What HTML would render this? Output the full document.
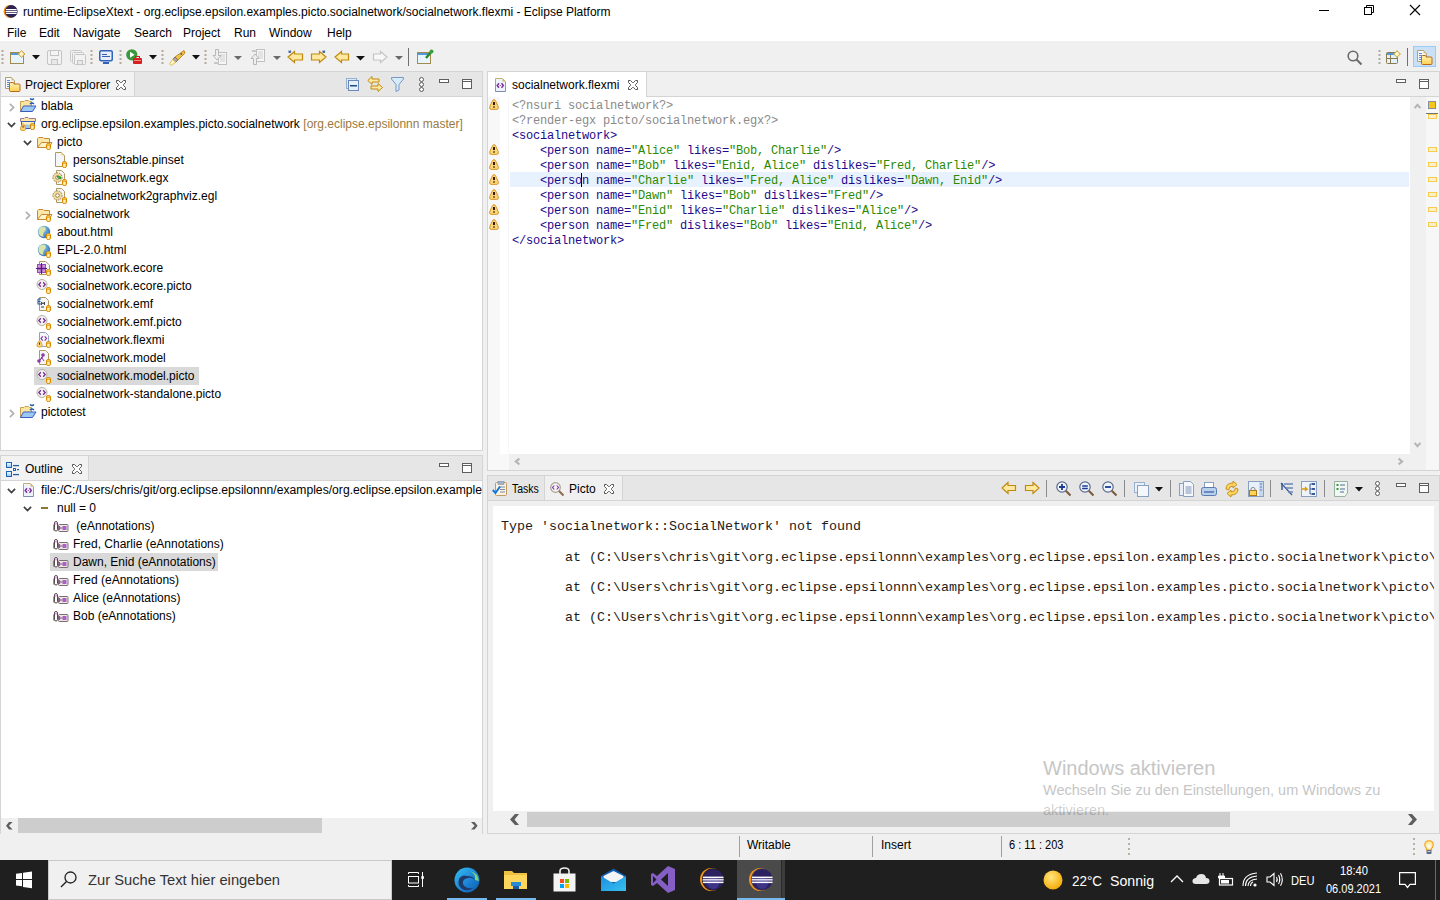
<!DOCTYPE html>
<html><head><meta charset="utf-8"><style>
*{margin:0;padding:0;box-sizing:border-box}
html,body{width:1440px;height:900px;overflow:hidden;background:#f0f0f0;font-family:"Liberation Sans",sans-serif;font-size:12px;color:#000}
.a{position:absolute}
.t{position:absolute;white-space:pre;line-height:14px}
svg{position:absolute;overflow:visible}
.code{position:absolute;white-space:pre;font-family:"Liberation Mono",monospace;font-size:12px;letter-spacing:-0.2px;line-height:15px}
.pi{color:#8a8a8a}.tg{color:#1c0a8a}.vl{color:#2a8a00}
.pic{position:absolute;white-space:pre;font-family:"Liberation Mono",monospace;font-size:13.33px;line-height:15px;color:#1c1c1c}
</style></head><body>
<div class="a" style="left:0px;top:0px;width:1440px;height:41px;background:#fff;"></div>
<svg style="left:3px;top:5px" width="15" height="13" viewBox="0 0 15 13"><circle cx="7" cy="6.4" r="6.4" fill="#f7941e"/><circle cx="8.3" cy="6.4" r="6.3" fill="#2c2255"/><rect x="3" y="4" width="10.6" height="1.2" fill="#fff"/><rect x="2.6" y="5.9" width="11.4" height="1.2" fill="#fff"/><rect x="3" y="7.8" width="10.6" height="1.2" fill="#fff"/></svg>
<div class="t" style="left:23px;top:5px">runtime-EclipseXtext - org.eclipse.epsilon.examples.picto.socialnetwork/socialnetwork.flexmi - Eclipse Platform</div>
<svg style="left:1319px;top:10px" width="10" height="1" viewBox="0 0 10 1"><rect width="10" height="1" fill="#000"/></svg>
<svg style="left:1364px;top:5px" width="10" height="10" viewBox="0 0 10 10"><rect x="0.5" y="2.5" width="7" height="7" fill="none" stroke="#000"/><path d="M2.5 2.5V0.5H9.5V7.5H7.5" fill="none" stroke="#000"/></svg>
<svg style="left:1410px;top:5px" width="10" height="10" viewBox="0 0 10 10"><path d="M0 0L10 10M10 0L0 10" stroke="#000" stroke-width="1.1"/></svg>
<div class="t" style="left:7px;top:26px">File</div>
<div class="t" style="left:39px;top:26px">Edit</div>
<div class="t" style="left:73px;top:26px">Navigate</div>
<div class="t" style="left:134px;top:26px">Search</div>
<div class="t" style="left:183px;top:26px">Project</div>
<div class="t" style="left:234px;top:26px">Run</div>
<div class="t" style="left:269px;top:26px">Window</div>
<div class="t" style="left:327px;top:26px">Help</div>
<!-- toolbar -->
<div id="toolbar">
<svg style="left:1px;top:49px" width="3" height="17"><rect x="0.5" y="1" width="2" height="2" fill="#b3aa99"/><rect x="0.5" y="5" width="2" height="2" fill="#b3aa99"/><rect x="0.5" y="9" width="2" height="2" fill="#b3aa99"/><rect x="0.5" y="13" width="2" height="2" fill="#b3aa99"/></svg>
<svg style="left:10px;top:50px" width="16" height="15" viewBox="0 0 16 15"><rect x="0.5" y="2.5" width="13" height="11" fill="#e8f4fc" stroke="#a08a50"/><rect x="1" y="3" width="12" height="2" fill="#4e9ad8"/><path d="M11.5 0.5L13 2.5L15 4L13 5.5L11.5 7.5L10 5.5L8 4L10 2.5Z" fill="#fff5c0" stroke="#c9a040"/></svg>
<svg style="left:32px;top:55px" width="8" height="5"><path d="M0 0H8L4 4.5Z" fill="#111"/></svg>
<svg style="left:47px;top:50px" width="15" height="15" viewBox="0 0 15 15"><rect x="0.5" y="0.5" width="14" height="14" rx="1.5" fill="#f2f2f2" stroke="#c4c4c4"/><rect x="3.5" y="0.5" width="8" height="5" fill="#f5f5f5" stroke="#c4c4c4"/><rect x="4.5" y="9.5" width="6" height="5" fill="#e8e8e8" stroke="#c4c4c4"/></svg>
<svg style="left:70px;top:50px" width="16" height="15" viewBox="0 0 16 15"><rect x="0.5" y="0.5" width="11" height="11" rx="1" fill="#f2f2f2" stroke="#c8c8c8"/><rect x="2.5" y="2.5" width="11" height="11" rx="1" fill="#f2f2f2" stroke="#c8c8c8"/><rect x="4.5" y="4.5" width="11" height="10" rx="1" fill="#f2f2f2" stroke="#c4c4c4"/><rect x="7.5" y="10.5" width="5" height="4" fill="#e8e8e8" stroke="#c4c4c4"/></svg>
<svg style="left:90px;top:49px" width="3" height="17"><rect x="0.5" y="1" width="2" height="2" fill="#b3aa99"/><rect x="0.5" y="5" width="2" height="2" fill="#b3aa99"/><rect x="0.5" y="9" width="2" height="2" fill="#b3aa99"/><rect x="0.5" y="13" width="2" height="2" fill="#b3aa99"/></svg>
<svg style="left:99px;top:50px" width="14" height="14" viewBox="0 0 14 14"><rect x="0.75" y="0.75" width="12.5" height="10" rx="1.5" fill="#e6eefa" stroke="#2f62b8" stroke-width="1.5"/><rect x="3" y="4" width="5" height="1" fill="#3860a8"/><rect x="3" y="6" width="8" height="1" fill="#3860a8"/><rect x="4" y="12" width="6" height="2" fill="#2f62b8"/></svg>
<svg style="left:119px;top:49px" width="3" height="17"><rect x="0.5" y="1" width="2" height="2" fill="#b3aa99"/><rect x="0.5" y="5" width="2" height="2" fill="#b3aa99"/><rect x="0.5" y="9" width="2" height="2" fill="#b3aa99"/><rect x="0.5" y="13" width="2" height="2" fill="#b3aa99"/></svg>
<svg style="left:126px;top:49px" width="17" height="16" viewBox="0 0 17 16"><circle cx="5.8" cy="5.8" r="5.6" fill="#3a9a3a"/><path d="M4 2.8L8.6 5.8L4 8.8Z" fill="#fff"/><rect x="7" y="9" width="9" height="6" rx="1" fill="#d42020"/><rect x="9.5" y="7.5" width="4" height="2" fill="none" stroke="#d42020"/><rect x="8" y="11" width="7" height="1" fill="#ff8a8a"/></svg>
<svg style="left:149px;top:55px" width="8" height="5"><path d="M0 0H8L4 4.5Z" fill="#111"/></svg>
<svg style="left:161px;top:49px" width="3" height="17"><rect x="0.5" y="1" width="2" height="2" fill="#b3aa99"/><rect x="0.5" y="5" width="2" height="2" fill="#b3aa99"/><rect x="0.5" y="9" width="2" height="2" fill="#b3aa99"/><rect x="0.5" y="13" width="2" height="2" fill="#b3aa99"/></svg>
<svg style="left:169px;top:50px" width="17" height="16" viewBox="0 0 17 16"><path d="M15 0.5L16 3L9 10L6 7Z" fill="#f1c24a" stroke="#c08a20"/><path d="M6 7L9 10L6.5 12.5L3.5 9.5Z" fill="#a8a8b0" stroke="#907040"/><path d="M3.5 9.5L6.5 12.5L2 15.5L0.5 14Z" fill="#fff6c8" stroke="#e0c060"/><circle cx="12.3" cy="4" r="0.9" fill="#2f62b8"/></svg>
<svg style="left:192px;top:55px" width="8" height="5"><path d="M0 0H8L4 4.5Z" fill="#111"/></svg>
<svg style="left:204px;top:49px" width="3" height="17"><rect x="0.5" y="1" width="2" height="2" fill="#b3aa99"/><rect x="0.5" y="5" width="2" height="2" fill="#b3aa99"/><rect x="0.5" y="9" width="2" height="2" fill="#b3aa99"/><rect x="0.5" y="13" width="2" height="2" fill="#b3aa99"/></svg>
<svg style="left:213px;top:49px" width="14" height="16" viewBox="0 0 14 16"><rect x="5.5" y="3.5" width="8" height="12" fill="#f6f6f6" stroke="#c0c0c0"/><path d="M7 6H12M7 8H12M7 10H12M7 12H12" stroke="#d0d0d0"/><path d="M2.5 0.5H5.5V6.5H8L4 11L0 6.5H2.5Z" fill="#eee" stroke="#b8b8b8"/><rect x="1" y="13" width="5" height="2" fill="#c8c8c8"/></svg>
<svg style="left:234px;top:56px" width="8" height="5"><path d="M0 0H8L4 4Z" fill="#6a6a6a"/></svg>
<svg style="left:251px;top:49px" width="14" height="16" viewBox="0 0 14 16"><rect x="5.5" y="0.5" width="8" height="12" fill="#f6f6f6" stroke="#c0c0c0"/><path d="M7 3H12M7 5H12M7 7H12M7 9H12" stroke="#d0d0d0"/><path d="M2.5 15.5H5.5V9.5H8L4 5L0 9.5H2.5Z" fill="#eee" stroke="#b8b8b8"/><rect x="1" y="1" width="4" height="2" fill="#c8c8c8"/></svg>
<svg style="left:273px;top:56px" width="8" height="5"><path d="M0 0H8L4 4Z" fill="#6a6a6a"/></svg>
<svg style="left:287px;top:50px" width="17" height="14" viewBox="0 0 17 14"><path d="M7.5 1.5L1 7L7.5 12.5V10H15.5V4H7.5Z" fill="#ffe9a0" stroke="#c08a10" stroke-width="1.2"/><path d="M2 0.5L3.5 3M3.5 0.5L2 3M1.3 1.8H4.2" stroke="#3a5a9a" stroke-width="1"/></svg>
<svg style="left:310px;top:50px" width="17" height="14" viewBox="0 0 17 14"><path d="M9.5 1.5L16 7L9.5 12.5V10H1.5V4H9.5Z" fill="#ffe9a0" stroke="#c08a10" stroke-width="1.2"/><path d="M13 0.5L14.5 3M14.5 0.5L13 3M12.3 1.8H15.2" stroke="#3a5a9a" stroke-width="1"/></svg>
<svg style="left:334px;top:50px" width="16" height="14" viewBox="0 0 16 14"><path d="M7.5 1.5L1 7L7.5 12.5V10H14.5V4H7.5Z" fill="#ffe9a0" stroke="#c08a10" stroke-width="1.2"/></svg>
<svg style="left:356px;top:56px" width="9" height="5"><path d="M0 0H9L4.5 4.5Z" fill="#111"/></svg>
<svg style="left:372px;top:50px" width="16" height="14" viewBox="0 0 16 14"><path d="M8.5 1.5L15 7L8.5 12.5V10H1.5V4H8.5Z" fill="#f8f8f8" stroke="#c4c4c4" stroke-width="1.2"/></svg>
<svg style="left:395px;top:56px" width="8" height="5"><path d="M0 0H8L4 4Z" fill="#6a6a6a"/></svg>
<svg style="left:408px;top:48px" width="1" height="18"><rect width="1" height="18" fill="#6e6e6e"/></svg>
<svg style="left:417px;top:49px" width="17" height="16" viewBox="0 0 17 16"><rect x="0.5" y="3.5" width="13" height="11" fill="#e8f4fc" stroke="#a08a50"/><rect x="1" y="4" width="12" height="2" fill="#4e9ad8"/><path d="M9 9L15 2" stroke="#2a8a2a" stroke-width="2.5"/><circle cx="14.5" cy="2.5" r="2" fill="#3aa03a"/></svg>
<!-- right side toolbar -->
<svg style="left:1347px;top:50px" width="16" height="16" viewBox="0 0 16 16"><circle cx="6" cy="6" r="4.8" fill="none" stroke="#6a6a6a" stroke-width="1.6"/><path d="M9.5 9.5L14.5 14.5" stroke="#6a6a6a" stroke-width="2"/></svg>
<svg style="left:1378px;top:49px" width="3" height="17"><rect x="0.5" y="1" width="2" height="2" fill="#b3aa99"/><rect x="0.5" y="5" width="2" height="2" fill="#b3aa99"/><rect x="0.5" y="9" width="2" height="2" fill="#b3aa99"/><rect x="0.5" y="13" width="2" height="2" fill="#b3aa99"/></svg>
<svg style="left:1386px;top:50px" width="15" height="15" viewBox="0 0 15 15"><rect x="0.5" y="2.5" width="11" height="11" rx="1" fill="#e3f1fb" stroke="#8a7a50"/><rect x="1" y="3" width="10" height="2" fill="#4e9ad8"/><path d="M4.5 5V13.5M1 8.5H11" stroke="#8a7a50"/><path d="M11 0.5L12.5 2.5L14.5 4L12.5 5.5L11 7.5L9.5 5.5L7.5 4L9.5 2.5Z" fill="#fff5c0" stroke="#c9a040"/></svg>
<svg style="left:1407px;top:48px" width="1" height="18"><rect width="1" height="18" fill="#6e6e6e"/></svg>
<div class="a" style="left:1413px;top:46px;width:23px;height:21px;background:#c9e0f7;border:1px solid #99ccf5"></div>
<svg style="left:1417px;top:50px" width="16" height="16" viewBox="0 0 16 16"><defs><linearGradient id="pf2" x1="0" y1="0" x2="0" y2="1"><stop offset="0" stop-color="#fff4b8"/><stop offset="1" stop-color="#ffcf50"/></linearGradient></defs><path d="M0.5 0.5H6.5L9.5 3.5V11.5H0.5Z" fill="#f6f8fc" stroke="#b0a070"/><path d="M6.5 0.5V3.5H9.5Z" fill="#d8c088"/><rect x="2" y="3" width="3" height="1" fill="#6088c8"/><rect x="2" y="5" width="3" height="1" fill="#6088c8"/><rect x="2" y="7" width="2.5" height="1" fill="#6088c8"/><rect x="2" y="9" width="2.5" height="1" fill="#6088c8"/><path d="M4.5 7Q4.5 5.5 5.5 5.5H8Q9 5.5 9 6.5V7H14Q15 7 15 8V13.5Q15 14.5 14 14.5H5.5Q4.5 14.5 4.5 13.5Z" fill="url(#pf2)" stroke="#b86a1a"/></svg>
</div>

<div class="a" style="left:0px;top:71px;width:483px;height:380px;background:#d4d4d4;"></div>
<div class="a" style="left:1px;top:72px;width:481px;height:378px;background:#fff;"></div>
<div class="a" style="left:1px;top:72px;width:481px;height:24px;background:#e6e6e6;"></div>
<div class="a" style="left:1px;top:96px;width:481px;height:1px;background:#d4d4d4;"></div>
<div class="a" style="left:1px;top:72px;width:133px;height:24px;background:#f2f2f2;"></div>
<div class="a" style="left:134px;top:72px;width:1px;height:25px;background:#d4d4d4;"></div>
<svg style="left:5px;top:77px" width="16" height="16" viewBox="0 0 16 16"><defs><linearGradient id="pf1" x1="0" y1="0" x2="0" y2="1"><stop offset="0" stop-color="#fff4b8"/><stop offset="1" stop-color="#ffcf50"/></linearGradient></defs><path d="M0.5 0.5H6.5L9.5 3.5V11.5H0.5Z" fill="#f6f8fc" stroke="#b0a070"/><path d="M6.5 0.5V3.5H9.5Z" fill="#d8c088"/><rect x="2" y="3" width="3" height="1" fill="#6088c8"/><rect x="2" y="5" width="3" height="1" fill="#6088c8"/><rect x="2" y="7" width="2.5" height="1" fill="#6088c8"/><rect x="2" y="9" width="2.5" height="1" fill="#6088c8"/><path d="M4.5 7Q4.5 5.5 5.5 5.5H8Q9 5.5 9 6.5V7H14Q15 7 15 8V13.5Q15 14.5 14 14.5H5.5Q4.5 14.5 4.5 13.5Z" fill="url(#pf1)" stroke="#b86a1a"/></svg>
<div class="t" style="left:25px;top:78px">Project Explorer</div>
<svg style="left:116px;top:80px" width="10" height="10" viewBox="0 0 10 10"><path d="M0.5 0.5H2.5L4.5 2.5H5.5L7.5 0.5H9.5V2.5L7.5 4.5V5.5L9.5 7.5V9.5H7.5L5.5 7.5H4.5L2.5 9.5H0.5V7.5L2.5 5.5V4.5L0.5 2.5Z" fill="#fff" stroke="#555" stroke-width="1" stroke-linejoin="miter"/></svg>
<svg style="left:346px;top:78px" width="13" height="13" viewBox="0 0 13 13"><rect x="0.5" y="0.5" width="10" height="10" fill="#dbe8f6" stroke="#9ab0d0"/><rect x="2.5" y="2.5" width="10" height="10" fill="#e6f0fa" stroke="#6a88b8"/><rect x="4" y="7" width="7" height="1.5" fill="#1a4a8a"/></svg>
<svg style="left:367px;top:76px" width="17" height="16" viewBox="0 0 17 16"><path d="M5 0.5L0.8 4.5L5 8.5V6H12V3H5Z" fill="#ffe9a0" stroke="#c08a10"/><path d="M11 7.5L15.5 11.5L11 15.5V13H4V10H11Z" fill="#ffe9a0" stroke="#c08a10"/></svg>
<svg style="left:391px;top:77px" width="13" height="15" viewBox="0 0 13 15"><path d="M0.5 0.5H12.5V2L8 7.5V13L5 14.5V7.5L0.5 2Z" fill="#d6ecfa" stroke="#7a98c0"/></svg>
<svg style="left:419px;top:77px" width="5" height="15" viewBox="0 0 5 15"><circle cx="2.5" cy="2.5" r="2" fill="#fff" stroke="#5a5a5a"/><circle cx="2.5" cy="7.5" r="2" fill="#fff" stroke="#5a5a5a"/><circle cx="2.5" cy="12.5" r="2" fill="#fff" stroke="#5a5a5a"/></svg>
<svg style="left:439px;top:79px" width="10" height="4" viewBox="0 0 10 4"><rect x="0.5" y="0.5" width="9" height="3" fill="#fff" stroke="#5f5f5f"/></svg>
<svg style="left:462px;top:79px" width="10" height="10" viewBox="0 0 10 10"><rect x="0.5" y="0.5" width="9" height="9" fill="#fff" stroke="#5f5f5f"/><path d="M0 2.5H10" stroke="#5f5f5f"/></svg>
<div class="a" style="left:34px;top:367px;width:165px;height:18px;background:#d9d9d9;"></div>
<svg style="left:9px;top:103px" width="6" height="9" viewBox="0 0 6 9"><path d="M0.9 0.9L4.6 4.5L0.9 8.1" fill="none" stroke="#b0b0b0" stroke-width="1.7"/></svg>
<svg style="left:20px;top:98px" width="17" height="15" viewBox="0 0 17 15"><path d="M0.5 3.5H4L5 2.5H8.5L9.5 3.5H11.5V13.5H0.5Z" fill="#fbe3a0" stroke="#c6a050"/><path d="M0.5 13.5L3.5 8H16L12.5 13.5Z" fill="#9cc8f4" stroke="#3a5cc0"/><path d="M10 0.5Q12 2.5 14 0.5M10 6Q12 4 14 6" fill="none" stroke="#1f5aa8" stroke-width="1.3"/></svg>
<div class="t" style="left:41px;top:99px">blabla</div>
<svg style="left:7px;top:122px" width="9" height="6" viewBox="0 0 9 6"><path d="M0.9 0.9L4.5 4.6L8.1 0.9" fill="none" stroke="#404040" stroke-width="1.7"/></svg>
<svg style="left:20px;top:116px" width="17" height="15" viewBox="0 0 17 15"><path d="M0.5 2.5H4L5 1.5H8L9 2.5H15.5V5.5H0.5Z" fill="#fbe3a0" stroke="#9a7aa0"/><path d="M1.5 5.5H14.5V12.5H1.5Z" fill="#fff0c0" stroke="#3a5cc0"/><path d="M5 8.5H13V12H5Z" fill="#9cc8f4"/><path d="M3 7.5Q4 7.5 5.5 12Q6 14.5 4 14.5H2Q0 14.5 0.5 12Q2 7.5 3 7.5Z" fill="#fad67a" stroke="#d8962a" stroke-width="0.9"/><rect x="2.6" y="9.5" width="0.9" height="2.2" fill="#3a1800"/><path d="M10.5 8.5Q10.5 7.5 12.5 7.5Q14.5 7.5 14.5 8.5V12.5Q14.5 13.5 12.5 13.5Q10.5 13.5 10.5 12.5Z" fill="#ffd86a" stroke="#d98a00" stroke-width="1"/><path d="M10.8 9.2H14.2" stroke="#d98a00" stroke-width="0.8"/><rect x="11.6" y="10" width="1.2" height="2.6" fill="#fff6d0"/></svg>
<div class="t" style="left:41px;top:117px">org.eclipse.epsilon.examples.picto.socialnetwork</div>
<div class="t" style="left:300px;top:117px;color:#9a7a40"> [org.eclipse.epsilonnn master]</div>
<svg style="left:23px;top:140px" width="9" height="6" viewBox="0 0 9 6"><path d="M0.9 0.9L4.5 4.6L8.1 0.9" fill="none" stroke="#404040" stroke-width="1.7"/></svg>
<svg style="left:36px;top:134px" width="17" height="16" viewBox="0 0 17 16"><path d="M1.5 13.5V4.5L2.5 3.5H7L8 4.5H13.5V13.5Z" fill="#fde7a8" stroke="#c68a3a"/><path d="M1.5 13.5L5.5 8.5H16L13 13.5Z" fill="#fff3c8" stroke="#c68a3a"/><path d="M10.5 10.5Q10.5 9.5 12.5 9.5Q14.5 9.5 14.5 10.5V14.5Q14.5 15.5 12.5 15.5Q10.5 15.5 10.5 14.5Z" fill="#ffd86a" stroke="#d98a00" stroke-width="1"/><path d="M10.8 11.2H14.2" stroke="#d98a00" stroke-width="0.8"/><rect x="11.6" y="12" width="1.2" height="2.6" fill="#fff6d0"/></svg>
<div class="t" style="left:57px;top:135px">picto</div>
<svg style="left:52px;top:152px" width="17" height="16" viewBox="0 0 17 16"><path d="M3.5 0.5H9.5L12.5 3.5V14.5H3.5Z" fill="#f4f6fa" stroke="#b09a60"/><path d="M9.5 0.5L12.5 3.5H9.5Z" fill="#e8cc80"/><path d="M10.5 10.5Q10.5 9.5 12.5 9.5Q14.5 9.5 14.5 10.5V14.5Q14.5 15.5 12.5 15.5Q10.5 15.5 10.5 14.5Z" fill="#ffd86a" stroke="#d98a00" stroke-width="1"/><path d="M10.8 11.2H14.2" stroke="#d98a00" stroke-width="0.8"/><rect x="11.6" y="12" width="1.2" height="2.6" fill="#fff6d0"/></svg>
<div class="t" style="left:73px;top:153px">persons2table.pinset</div>
<svg style="left:52px;top:170px" width="17" height="16" viewBox="0 0 17 16"><path d="M4.5 0.5H9.5L12.5 3.5V14.5H4.5Z" fill="#f4f6fa" stroke="#b09a60"/><circle cx="5.5" cy="7.5" r="4.6" fill="#f0dca0" stroke="#9a8050" stroke-dasharray="1.6 0.9"/><circle cx="5.5" cy="7.5" r="1.8" fill="#fff" stroke="#9a8050"/><path d="M5 6Q7 5 8 7L9 6V9H6L7 8Q6.5 7 5 8Z" fill="#2a9a2a"/><path d="M10.5 10.5Q10.5 9.5 12.5 9.5Q14.5 9.5 14.5 10.5V14.5Q14.5 15.5 12.5 15.5Q10.5 15.5 10.5 14.5Z" fill="#ffd86a" stroke="#d98a00" stroke-width="1"/><path d="M10.8 11.2H14.2" stroke="#d98a00" stroke-width="0.8"/><rect x="11.6" y="12" width="1.2" height="2.6" fill="#fff6d0"/></svg>
<div class="t" style="left:73px;top:171px">socialnetwork.egx</div>
<svg style="left:52px;top:188px" width="17" height="16" viewBox="0 0 17 16"><path d="M4.5 0.5H9.5L12.5 3.5V14.5H4.5Z" fill="#f4f6fa" stroke="#b09a60"/><circle cx="5.5" cy="7.5" r="4.6" fill="#f0dca0" stroke="#9a8050" stroke-dasharray="1.6 0.9"/><circle cx="5.5" cy="7.5" r="1.8" fill="#fff" stroke="#9a8050"/><path d="M10.5 10.5Q10.5 9.5 12.5 9.5Q14.5 9.5 14.5 10.5V14.5Q14.5 15.5 12.5 15.5Q10.5 15.5 10.5 14.5Z" fill="#ffd86a" stroke="#d98a00" stroke-width="1"/><path d="M10.8 11.2H14.2" stroke="#d98a00" stroke-width="0.8"/><rect x="11.6" y="12" width="1.2" height="2.6" fill="#fff6d0"/></svg>
<div class="t" style="left:73px;top:189px">socialnetwork2graphviz.egl</div>
<svg style="left:25px;top:211px" width="6" height="9" viewBox="0 0 6 9"><path d="M0.9 0.9L4.6 4.5L0.9 8.1" fill="none" stroke="#b0b0b0" stroke-width="1.7"/></svg>
<svg style="left:36px;top:206px" width="17" height="16" viewBox="0 0 17 16"><path d="M1.5 13.5V4.5L2.5 3.5H7L8 4.5H13.5V13.5Z" fill="#fde7a8" stroke="#c68a3a"/><path d="M1.5 13.5L5.5 8.5H16L13 13.5Z" fill="#fff3c8" stroke="#c68a3a"/><path d="M10.5 10.5Q10.5 9.5 12.5 9.5Q14.5 9.5 14.5 10.5V14.5Q14.5 15.5 12.5 15.5Q10.5 15.5 10.5 14.5Z" fill="#ffd86a" stroke="#d98a00" stroke-width="1"/><path d="M10.8 11.2H14.2" stroke="#d98a00" stroke-width="0.8"/><rect x="11.6" y="12" width="1.2" height="2.6" fill="#fff6d0"/></svg>
<div class="t" style="left:57px;top:207px">socialnetwork</div>
<svg style="left:36px;top:224px" width="17" height="16" viewBox="0 0 17 16"><defs><radialGradient id="glb" cx="0.35" cy="0.3" r="0.8"><stop offset="0" stop-color="#9ad0f0"/><stop offset="1" stop-color="#2a6ab8"/></radialGradient></defs><circle cx="8" cy="8" r="6.2" fill="url(#glb)"/><path d="M3.5 4Q6 2 9 3Q11 5.5 8.5 7.5Q6.5 9 7.5 13Q4 12.5 2.5 9.5Q2 6 3.5 4Z" fill="#d8e4a8"/><path d="M10.5 10.5Q10.5 9.5 12.5 9.5Q14.5 9.5 14.5 10.5V14.5Q14.5 15.5 12.5 15.5Q10.5 15.5 10.5 14.5Z" fill="#ffd86a" stroke="#d98a00" stroke-width="1"/><path d="M10.8 11.2H14.2" stroke="#d98a00" stroke-width="0.8"/><rect x="11.6" y="12" width="1.2" height="2.6" fill="#fff6d0"/></svg>
<div class="t" style="left:57px;top:225px">about.html</div>
<svg style="left:36px;top:242px" width="17" height="16" viewBox="0 0 17 16"><defs><radialGradient id="glb" cx="0.35" cy="0.3" r="0.8"><stop offset="0" stop-color="#9ad0f0"/><stop offset="1" stop-color="#2a6ab8"/></radialGradient></defs><circle cx="8" cy="8" r="6.2" fill="url(#glb)"/><path d="M3.5 4Q6 2 9 3Q11 5.5 8.5 7.5Q6.5 9 7.5 13Q4 12.5 2.5 9.5Q2 6 3.5 4Z" fill="#d8e4a8"/><path d="M10.5 10.5Q10.5 9.5 12.5 9.5Q14.5 9.5 14.5 10.5V14.5Q14.5 15.5 12.5 15.5Q10.5 15.5 10.5 14.5Z" fill="#ffd86a" stroke="#d98a00" stroke-width="1"/><path d="M10.8 11.2H14.2" stroke="#d98a00" stroke-width="0.8"/><rect x="11.6" y="12" width="1.2" height="2.6" fill="#fff6d0"/></svg>
<div class="t" style="left:57px;top:243px">EPL-2.0.html</div>
<svg style="left:36px;top:260px" width="17" height="16" viewBox="0 0 17 16"><path d="M3.5 1.5H9.5L13.5 5V14.5H3.5Z" fill="#f4f6fa" stroke="#b09a60"/><rect x="1" y="4" width="9" height="9" fill="#9a4ab8"/><path d="M0 8.5H11M5.5 3V14" stroke="#5a1a78" stroke-width="1"/><rect x="2" y="5" width="2.5" height="2.5" fill="#c898d8"/><rect x="6.5" y="5" width="2.5" height="2.5" fill="#c898d8"/><rect x="2" y="9.5" width="2.5" height="2.5" fill="#c898d8"/><rect x="6.5" y="9.5" width="2.5" height="2.5" fill="#c898d8"/><path d="M10.5 10.5Q10.5 9.5 12.5 9.5Q14.5 9.5 14.5 10.5V14.5Q14.5 15.5 12.5 15.5Q10.5 15.5 10.5 14.5Z" fill="#ffd86a" stroke="#d98a00" stroke-width="1"/><path d="M10.8 11.2H14.2" stroke="#d98a00" stroke-width="0.8"/><rect x="11.6" y="12" width="1.2" height="2.6" fill="#fff6d0"/></svg>
<div class="t" style="left:57px;top:261px">socialnetwork.ecore</div>
<svg style="left:36px;top:278px" width="17" height="16" viewBox="0 0 17 16"><circle cx="6" cy="6.5" r="5" fill="#f2f2f2" stroke="#b0b0a0"/><path d="M4.8 4.3L2.8 6.5L4.8 8.7M7.2 4.3L9.2 6.5L7.2 8.7" fill="none" stroke="#7a2a98" stroke-width="1.3"/><path d="M10.5 10.5Q10.5 9.5 12.5 9.5Q14.5 9.5 14.5 10.5V14.5Q14.5 15.5 12.5 15.5Q10.5 15.5 10.5 14.5Z" fill="#ffd86a" stroke="#d98a00" stroke-width="1"/><path d="M10.8 11.2H14.2" stroke="#d98a00" stroke-width="0.8"/><rect x="11.6" y="12" width="1.2" height="2.6" fill="#fff6d0"/></svg>
<div class="t" style="left:57px;top:279px">socialnetwork.ecore.picto</div>
<svg style="left:36px;top:296px" width="17" height="16" viewBox="0 0 17 16"><path d="M3.5 1.5H9.5L12.5 4.5V14.5H3.5Z" fill="#f4f6fa" stroke="#b09a60"/><path d="M2 3H5M2 3V8H5M2 5.5H4.5" fill="none" stroke="#2a5a9a" stroke-width="1.1"/><path d="M5.5 9V6L7 8L8.5 6V9" fill="none" stroke="#3a3a3a" stroke-width="0.9"/><path d="M5 11H8" stroke="#3a3a3a"/><path d="M10.5 10.5Q10.5 9.5 12.5 9.5Q14.5 9.5 14.5 10.5V14.5Q14.5 15.5 12.5 15.5Q10.5 15.5 10.5 14.5Z" fill="#ffd86a" stroke="#d98a00" stroke-width="1"/><path d="M10.8 11.2H14.2" stroke="#d98a00" stroke-width="0.8"/><rect x="11.6" y="12" width="1.2" height="2.6" fill="#fff6d0"/></svg>
<div class="t" style="left:57px;top:297px">socialnetwork.emf</div>
<svg style="left:36px;top:314px" width="17" height="16" viewBox="0 0 17 16"><circle cx="6" cy="6.5" r="5" fill="#f2f2f2" stroke="#b0b0a0"/><path d="M4.8 4.3L2.8 6.5L4.8 8.7M7.2 4.3L9.2 6.5L7.2 8.7" fill="none" stroke="#7a2a98" stroke-width="1.3"/><path d="M10.5 10.5Q10.5 9.5 12.5 9.5Q14.5 9.5 14.5 10.5V14.5Q14.5 15.5 12.5 15.5Q10.5 15.5 10.5 14.5Z" fill="#ffd86a" stroke="#d98a00" stroke-width="1"/><path d="M10.8 11.2H14.2" stroke="#d98a00" stroke-width="0.8"/><rect x="11.6" y="12" width="1.2" height="2.6" fill="#fff6d0"/></svg>
<div class="t" style="left:57px;top:315px">socialnetwork.emf.picto</div>
<svg style="left:36px;top:332px" width="17" height="16" viewBox="0 0 17 16"><path d="M3.5 0.5H9.5L12.5 3.5V14.5H3.5Z" fill="#f4f6fa" stroke="#9aa0b8"/><path d="M6.8 4.3L5 6.5L6.8 8.7M8.7 4.3L10.5 6.5L8.7 8.7" fill="none" stroke="#7a2a98" stroke-width="1.1"/><path d="M3.5 8.5Q4.5 8.5 6 12.5Q6.5 15 4.5 15H2.5Q0.5 15 1 12.5Q2.5 8.5 3.5 8.5Z" fill="#fad67a" stroke="#d8962a" stroke-width="0.9"/><rect x="3.1" y="10.5" width="0.9" height="2.2" fill="#3a1800"/><path d="M10.5 10.5Q10.5 9.5 12.5 9.5Q14.5 9.5 14.5 10.5V14.5Q14.5 15.5 12.5 15.5Q10.5 15.5 10.5 14.5Z" fill="#ffd86a" stroke="#d98a00" stroke-width="1"/><path d="M10.8 11.2H14.2" stroke="#d98a00" stroke-width="0.8"/><rect x="11.6" y="12" width="1.2" height="2.6" fill="#fff6d0"/></svg>
<div class="t" style="left:57px;top:333px">socialnetwork.flexmi</div>
<svg style="left:36px;top:350px" width="17" height="16" viewBox="0 0 17 16"><path d="M3.5 0.5H9.5L12.5 3.5V14.5H3.5Z" fill="#f4f6fa" stroke="#b09a60"/><circle cx="7" cy="5" r="1.8" fill="#8a3aa8"/><circle cx="3" cy="11" r="1.8" fill="#8a3aa8"/><path d="M7 5L6 8L3 11M6 8L8 11" stroke="#8a3aa8" stroke-width="1"/><path d="M10.5 10.5Q10.5 9.5 12.5 9.5Q14.5 9.5 14.5 10.5V14.5Q14.5 15.5 12.5 15.5Q10.5 15.5 10.5 14.5Z" fill="#ffd86a" stroke="#d98a00" stroke-width="1"/><path d="M10.8 11.2H14.2" stroke="#d98a00" stroke-width="0.8"/><rect x="11.6" y="12" width="1.2" height="2.6" fill="#fff6d0"/></svg>
<div class="t" style="left:57px;top:351px">socialnetwork.model</div>
<svg style="left:36px;top:368px" width="17" height="16" viewBox="0 0 17 16"><circle cx="6" cy="6.5" r="5" fill="#f2f2f2" stroke="#b0b0a0"/><path d="M4.8 4.3L2.8 6.5L4.8 8.7M7.2 4.3L9.2 6.5L7.2 8.7" fill="none" stroke="#7a2a98" stroke-width="1.3"/><path d="M10.5 10.5Q10.5 9.5 12.5 9.5Q14.5 9.5 14.5 10.5V14.5Q14.5 15.5 12.5 15.5Q10.5 15.5 10.5 14.5Z" fill="#ffd86a" stroke="#d98a00" stroke-width="1"/><path d="M10.8 11.2H14.2" stroke="#d98a00" stroke-width="0.8"/><rect x="11.6" y="12" width="1.2" height="2.6" fill="#fff6d0"/></svg>
<div class="t" style="left:57px;top:369px">socialnetwork.model.picto</div>
<svg style="left:36px;top:386px" width="17" height="16" viewBox="0 0 17 16"><circle cx="6" cy="6.5" r="5" fill="#f2f2f2" stroke="#b0b0a0"/><path d="M4.8 4.3L2.8 6.5L4.8 8.7M7.2 4.3L9.2 6.5L7.2 8.7" fill="none" stroke="#7a2a98" stroke-width="1.3"/><path d="M10.5 10.5Q10.5 9.5 12.5 9.5Q14.5 9.5 14.5 10.5V14.5Q14.5 15.5 12.5 15.5Q10.5 15.5 10.5 14.5Z" fill="#ffd86a" stroke="#d98a00" stroke-width="1"/><path d="M10.8 11.2H14.2" stroke="#d98a00" stroke-width="0.8"/><rect x="11.6" y="12" width="1.2" height="2.6" fill="#fff6d0"/></svg>
<div class="t" style="left:57px;top:387px">socialnetwork-standalone.picto</div>
<svg style="left:9px;top:409px" width="6" height="9" viewBox="0 0 6 9"><path d="M0.9 0.9L4.6 4.5L0.9 8.1" fill="none" stroke="#b0b0b0" stroke-width="1.7"/></svg>
<svg style="left:20px;top:404px" width="17" height="15" viewBox="0 0 17 15"><path d="M0.5 3.5H4L5 2.5H8.5L9.5 3.5H11.5V13.5H0.5Z" fill="#fbe3a0" stroke="#c6a050"/><path d="M0.5 13.5L3.5 8H16L12.5 13.5Z" fill="#9cc8f4" stroke="#3a5cc0"/><path d="M10 0.5Q12 2.5 14 0.5M10 6Q12 4 14 6" fill="none" stroke="#1f5aa8" stroke-width="1.3"/></svg>
<div class="t" style="left:41px;top:405px">pictotest</div>
<div class="a" style="left:0px;top:455px;width:483px;height:379px;background:#d4d4d4;"></div>
<div class="a" style="left:1px;top:456px;width:481px;height:377px;background:#fff;"></div>
<div class="a" style="left:1px;top:456px;width:481px;height:24px;background:#e6e6e6;"></div>
<div class="a" style="left:1px;top:480px;width:481px;height:1px;background:#d4d4d4;"></div>
<div class="a" style="left:1px;top:456px;width:87px;height:24px;background:#f2f2f2;"></div>
<div class="a" style="left:88px;top:456px;width:1px;height:25px;background:#d4d4d4;"></div>
<svg style="left:6px;top:462px" width="14" height="15" viewBox="0 0 14 15"><defs><linearGradient id="olg" x1="0" y1="0" x2="0" y2="1"><stop offset="0" stop-color="#ffffff"/><stop offset="1" stop-color="#8cc0f8"/></linearGradient></defs><rect x="0.5" y="0.5" width="5" height="5" fill="url(#olg)" stroke="#1a64b0"/><rect x="7.5" y="6.5" width="2" height="2" fill="#fff" stroke="#1a64b0"/><rect x="0.5" y="9.5" width="5" height="5" fill="url(#olg)" stroke="#1a64b0"/><rect x="7" y="3" width="6" height="1.2" fill="#2a5a98"/><rect x="7" y="2" width="6" height="1" fill="#d8f0ff"/><rect x="11" y="7" width="2" height="1.2" fill="#2a5a98"/><rect x="7" y="12" width="6" height="1.2" fill="#2a5a98"/><rect x="7" y="11" width="6" height="1" fill="#d8f0ff"/></svg>
<div class="t" style="left:25px;top:462px">Outline</div>
<svg style="left:72px;top:464px" width="10" height="10" viewBox="0 0 10 10"><path d="M0.5 0.5H2.5L4.5 2.5H5.5L7.5 0.5H9.5V2.5L7.5 4.5V5.5L9.5 7.5V9.5H7.5L5.5 7.5H4.5L2.5 9.5H0.5V7.5L2.5 5.5V4.5L0.5 2.5Z" fill="#fff" stroke="#555" stroke-width="1" stroke-linejoin="miter"/></svg>
<svg style="left:439px;top:463px" width="10" height="4" viewBox="0 0 10 4"><rect x="0.5" y="0.5" width="9" height="3" fill="#fff" stroke="#5f5f5f"/></svg>
<svg style="left:462px;top:463px" width="10" height="10" viewBox="0 0 10 10"><rect x="0.5" y="0.5" width="9" height="9" fill="#fff" stroke="#5f5f5f"/><path d="M0 2.5H10" stroke="#5f5f5f"/></svg>
<div class="a" style="left:50px;top:553px;width:168px;height:18px;background:#d9d9d9;"></div>
<svg style="left:7px;top:488px" width="9" height="6" viewBox="0 0 9 6"><path d="M0.9 0.9L4.5 4.6L8.1 0.9" fill="none" stroke="#404040" stroke-width="1.7"/></svg>
<svg style="left:23px;top:483px" width="11" height="14" viewBox="0 0 11 14"><defs><linearGradient id="fs1" x1="0" y1="0" x2="0" y2="1"><stop offset="0" stop-color="#bfae78"/><stop offset="1" stop-color="#7f8db0"/></linearGradient></defs><path d="M0.5 0.5H7.5L10.5 3.5V13.5H0.5Z" fill="#eef3fb" stroke="url(#fs1)"/><path d="M7.5 0.5L10.5 3.5H7.5Z" fill="#d9b060"/><path d="M4 5.3L2.2 7.5L4 9.7M6.5 5.3L8.3 7.5L6.5 9.7" fill="none" stroke="#7a2a98" stroke-width="1.4"/><circle cx="5.25" cy="7.5" r="0.6" fill="#7a2a98"/></svg>
<div class="a" style="left:41px;top:483px;width:441px;height:16px;overflow:hidden"><div class="t" style="left:0;top:0;transform:scaleX(1.0126);transform-origin:0 0">file:/C:/Users/chris/git/org.eclipse.epsilonnn/examples/org.eclipse.epsilon.examples.picto.socialnetwork/socialnetwork.flexmi</div></div>
<svg style="left:23px;top:506px" width="9" height="6" viewBox="0 0 9 6"><path d="M0.9 0.9L4.5 4.6L8.1 0.9" fill="none" stroke="#404040" stroke-width="1.7"/></svg>
<svg style="left:41px;top:507px" width="7" height="2" viewBox="0 0 7 2"><rect width="7" height="2" fill="#8a7a30"/></svg>
<div class="t" style="left:57px;top:501px">null = 0</div>
<svg style="left:53px;top:521px" width="16" height="12" viewBox="0 0 16 12"><path d="M0.5 3.5H1.8V9.5H0.5Z" fill="#3a2a30"/><rect x="1.5" y="0.5" width="3" height="9.5" rx="1.5" fill="#fff" stroke="#5a4a50" stroke-width="1"/><rect x="2.3" y="2" width="1.4" height="1.5" fill="#f070f0"/><rect x="5.5" y="3.5" width="9.5" height="7" rx="1" fill="#ecebd8" stroke="#7a6a78" stroke-width="1"/><rect x="9.5" y="5" width="4" height="4" fill="#a860c8"/><path d="M6.6 5V9M6.6 7H9.5" stroke="#9040b0" stroke-width="1"/></svg>
<div class="t" style="left:73px;top:519px"> (eAnnotations)</div>
<svg style="left:53px;top:539px" width="16" height="12" viewBox="0 0 16 12"><path d="M0.5 3.5H1.8V9.5H0.5Z" fill="#3a2a30"/><rect x="1.5" y="0.5" width="3" height="9.5" rx="1.5" fill="#fff" stroke="#5a4a50" stroke-width="1"/><rect x="2.3" y="2" width="1.4" height="1.5" fill="#f070f0"/><rect x="5.5" y="3.5" width="9.5" height="7" rx="1" fill="#ecebd8" stroke="#7a6a78" stroke-width="1"/><rect x="9.5" y="5" width="4" height="4" fill="#a860c8"/><path d="M6.6 5V9M6.6 7H9.5" stroke="#9040b0" stroke-width="1"/></svg>
<div class="t" style="left:73px;top:537px">Fred, Charlie (eAnnotations)</div>
<svg style="left:53px;top:557px" width="16" height="12" viewBox="0 0 16 12"><path d="M0.5 3.5H1.8V9.5H0.5Z" fill="#3a2a30"/><rect x="1.5" y="0.5" width="3" height="9.5" rx="1.5" fill="#fff" stroke="#5a4a50" stroke-width="1"/><rect x="2.3" y="2" width="1.4" height="1.5" fill="#f070f0"/><rect x="5.5" y="3.5" width="9.5" height="7" rx="1" fill="#ecebd8" stroke="#7a6a78" stroke-width="1"/><rect x="9.5" y="5" width="4" height="4" fill="#a860c8"/><path d="M6.6 5V9M6.6 7H9.5" stroke="#9040b0" stroke-width="1"/></svg>
<div class="t" style="left:73px;top:555px">Dawn, Enid (eAnnotations)</div>
<svg style="left:53px;top:575px" width="16" height="12" viewBox="0 0 16 12"><path d="M0.5 3.5H1.8V9.5H0.5Z" fill="#3a2a30"/><rect x="1.5" y="0.5" width="3" height="9.5" rx="1.5" fill="#fff" stroke="#5a4a50" stroke-width="1"/><rect x="2.3" y="2" width="1.4" height="1.5" fill="#f070f0"/><rect x="5.5" y="3.5" width="9.5" height="7" rx="1" fill="#ecebd8" stroke="#7a6a78" stroke-width="1"/><rect x="9.5" y="5" width="4" height="4" fill="#a860c8"/><path d="M6.6 5V9M6.6 7H9.5" stroke="#9040b0" stroke-width="1"/></svg>
<div class="t" style="left:73px;top:573px">Fred (eAnnotations)</div>
<svg style="left:53px;top:593px" width="16" height="12" viewBox="0 0 16 12"><path d="M0.5 3.5H1.8V9.5H0.5Z" fill="#3a2a30"/><rect x="1.5" y="0.5" width="3" height="9.5" rx="1.5" fill="#fff" stroke="#5a4a50" stroke-width="1"/><rect x="2.3" y="2" width="1.4" height="1.5" fill="#f070f0"/><rect x="5.5" y="3.5" width="9.5" height="7" rx="1" fill="#ecebd8" stroke="#7a6a78" stroke-width="1"/><rect x="9.5" y="5" width="4" height="4" fill="#a860c8"/><path d="M6.6 5V9M6.6 7H9.5" stroke="#9040b0" stroke-width="1"/></svg>
<div class="t" style="left:73px;top:591px">Alice (eAnnotations)</div>
<svg style="left:53px;top:611px" width="16" height="12" viewBox="0 0 16 12"><path d="M0.5 3.5H1.8V9.5H0.5Z" fill="#3a2a30"/><rect x="1.5" y="0.5" width="3" height="9.5" rx="1.5" fill="#fff" stroke="#5a4a50" stroke-width="1"/><rect x="2.3" y="2" width="1.4" height="1.5" fill="#f070f0"/><rect x="5.5" y="3.5" width="9.5" height="7" rx="1" fill="#ecebd8" stroke="#7a6a78" stroke-width="1"/><rect x="9.5" y="5" width="4" height="4" fill="#a860c8"/><path d="M6.6 5V9M6.6 7H9.5" stroke="#9040b0" stroke-width="1"/></svg>
<div class="t" style="left:73px;top:609px">Bob (eAnnotations)</div>
<div class="a" style="left:1px;top:818px;width:481px;height:16px;background:#f0f0f0;"></div>
<div class="a" style="left:18px;top:818px;width:304px;height:15px;background:#cdcdcd;"></div>
<svg style="left:6px;top:822px" width="7" height="8" viewBox="0 0 7 8"><path d="M3 0H6.6L2.9 3.7L6.6 7.4H3L0 3.7Z" fill="#5e5e5e"/></svg>
<svg style="left:471px;top:822px" width="7" height="8" viewBox="0 0 7 8"><path d="M3.6 0H0L3.7 3.7L0 7.4H3.6L6.6 3.7Z" fill="#5e5e5e"/></svg>
<div class="a" style="left:487px;top:71px;width:953px;height:400px;background:#d4d4d4;"></div>
<div class="a" style="left:488px;top:72px;width:951px;height:398px;background:#fff;"></div>
<div class="a" style="left:488px;top:72px;width:951px;height:24px;background:#f0f0f0;"></div>
<div class="a" style="left:488px;top:96px;width:951px;height:1px;background:#d4d4d4;"></div>
<div class="a" style="left:488px;top:72px;width:158px;height:25px;background:#fff;"></div>
<div class="a" style="left:646px;top:72px;width:1px;height:25px;background:#d4d4d4;"></div>
<svg style="left:495px;top:78px" width="11" height="14" viewBox="0 0 11 14"><defs><linearGradient id="fs2" x1="0" y1="0" x2="0" y2="1"><stop offset="0" stop-color="#bfae78"/><stop offset="1" stop-color="#7f8db0"/></linearGradient></defs><path d="M0.5 0.5H7.5L10.5 3.5V13.5H0.5Z" fill="#eef3fb" stroke="url(#fs2)"/><path d="M7.5 0.5L10.5 3.5H7.5Z" fill="#d9b060"/><path d="M4 5.3L2.2 7.5L4 9.7M6.5 5.3L8.3 7.5L6.5 9.7" fill="none" stroke="#7a2a98" stroke-width="1.4"/><circle cx="5.25" cy="7.5" r="0.6" fill="#7a2a98"/></svg>
<div class="t" style="left:512px;top:78px">socialnetwork.flexmi</div>
<svg style="left:628px;top:80px" width="10" height="10" viewBox="0 0 10 10"><path d="M0.5 0.5H2.5L4.5 2.5H5.5L7.5 0.5H9.5V2.5L7.5 4.5V5.5L9.5 7.5V9.5H7.5L5.5 7.5H4.5L2.5 9.5H0.5V7.5L2.5 5.5V4.5L0.5 2.5Z" fill="#fff" stroke="#555" stroke-width="1" stroke-linejoin="miter"/></svg>
<svg style="left:1396px;top:79px" width="10" height="4" viewBox="0 0 10 4"><rect x="0.5" y="0.5" width="9" height="3" fill="#fff" stroke="#5f5f5f"/></svg>
<svg style="left:1419px;top:79px" width="10" height="10" viewBox="0 0 10 10"><rect x="0.5" y="0.5" width="9" height="9" fill="#fff" stroke="#5f5f5f"/><path d="M0 2.5H10" stroke="#5f5f5f"/></svg>
<div class="a" style="left:488px;top:97px;width:12px;height:357px;background:#f8f8f8;"></div>
<div class="a" style="left:510px;top:172px;width:899px;height:15px;background:#e8f2fe;"></div>
<svg style="left:489px;top:99px" width="10" height="11" viewBox="0 0 10 11"><path d="M5 0.6Q6 0.6 6.9 2.4L9.2 7.6Q10 10.4 7.8 10.4H2.2Q0 10.4 0.8 7.6L3.1 2.4Q4 0.6 5 0.6Z" fill="#fad67a" stroke="#d8962a" stroke-width="1"/><rect x="4" y="3" width="2" height="3" fill="#3a1800"/><rect x="4" y="7" width="2" height="2" fill="#9a7028"/></svg>
<svg style="left:489px;top:144px" width="10" height="11" viewBox="0 0 10 11"><path d="M5 0.6Q6 0.6 6.9 2.4L9.2 7.6Q10 10.4 7.8 10.4H2.2Q0 10.4 0.8 7.6L3.1 2.4Q4 0.6 5 0.6Z" fill="#fad67a" stroke="#d8962a" stroke-width="1"/><rect x="4" y="3" width="2" height="3" fill="#3a1800"/><rect x="4" y="7" width="2" height="2" fill="#9a7028"/></svg>
<svg style="left:489px;top:159px" width="10" height="11" viewBox="0 0 10 11"><path d="M5 0.6Q6 0.6 6.9 2.4L9.2 7.6Q10 10.4 7.8 10.4H2.2Q0 10.4 0.8 7.6L3.1 2.4Q4 0.6 5 0.6Z" fill="#fad67a" stroke="#d8962a" stroke-width="1"/><rect x="4" y="3" width="2" height="3" fill="#3a1800"/><rect x="4" y="7" width="2" height="2" fill="#9a7028"/></svg>
<svg style="left:489px;top:174px" width="10" height="11" viewBox="0 0 10 11"><path d="M5 0.6Q6 0.6 6.9 2.4L9.2 7.6Q10 10.4 7.8 10.4H2.2Q0 10.4 0.8 7.6L3.1 2.4Q4 0.6 5 0.6Z" fill="#fad67a" stroke="#d8962a" stroke-width="1"/><rect x="4" y="3" width="2" height="3" fill="#3a1800"/><rect x="4" y="7" width="2" height="2" fill="#9a7028"/></svg>
<svg style="left:489px;top:189px" width="10" height="11" viewBox="0 0 10 11"><path d="M5 0.6Q6 0.6 6.9 2.4L9.2 7.6Q10 10.4 7.8 10.4H2.2Q0 10.4 0.8 7.6L3.1 2.4Q4 0.6 5 0.6Z" fill="#fad67a" stroke="#d8962a" stroke-width="1"/><rect x="4" y="3" width="2" height="3" fill="#3a1800"/><rect x="4" y="7" width="2" height="2" fill="#9a7028"/></svg>
<svg style="left:489px;top:204px" width="10" height="11" viewBox="0 0 10 11"><path d="M5 0.6Q6 0.6 6.9 2.4L9.2 7.6Q10 10.4 7.8 10.4H2.2Q0 10.4 0.8 7.6L3.1 2.4Q4 0.6 5 0.6Z" fill="#fad67a" stroke="#d8962a" stroke-width="1"/><rect x="4" y="3" width="2" height="3" fill="#3a1800"/><rect x="4" y="7" width="2" height="2" fill="#9a7028"/></svg>
<svg style="left:489px;top:219px" width="10" height="11" viewBox="0 0 10 11"><path d="M5 0.6Q6 0.6 6.9 2.4L9.2 7.6Q10 10.4 7.8 10.4H2.2Q0 10.4 0.8 7.6L3.1 2.4Q4 0.6 5 0.6Z" fill="#fad67a" stroke="#d8962a" stroke-width="1"/><rect x="4" y="3" width="2" height="3" fill="#3a1800"/><rect x="4" y="7" width="2" height="2" fill="#9a7028"/></svg>
<div class="a" style="left:508px;top:97px;width:1px;height:357px;background:#f7f7f7;"></div>
<div class="code" style="left:512px;top:99px"><span class="pi">&lt;?nsuri socialnetwork?&gt;</span></div>
<div class="code" style="left:512px;top:114px"><span class="pi">&lt;?render-egx picto/socialnetwork.egx?&gt;</span></div>
<div class="code" style="left:512px;top:129px"><span class="tg">&lt;socialnetwork&gt;</span></div>
<div class="code" style="left:512px;top:144px"><span class="tg">    &lt;person</span><span class="tg"> name=</span><span class="vl">&quot;Alice&quot;</span><span class="tg"> likes=</span><span class="vl">&quot;Bob, Charlie&quot;</span><span class="tg">/&gt;</span></div>
<div class="code" style="left:512px;top:159px"><span class="tg">    &lt;person</span><span class="tg"> name=</span><span class="vl">&quot;Bob&quot;</span><span class="tg"> likes=</span><span class="vl">&quot;Enid, Alice&quot;</span><span class="tg"> dislikes=</span><span class="vl">&quot;Fred, Charlie&quot;</span><span class="tg">/&gt;</span></div>
<div class="code" style="left:512px;top:174px"><span class="tg">    &lt;person</span><span class="tg"> name=</span><span class="vl">&quot;Charlie&quot;</span><span class="tg"> likes=</span><span class="vl">&quot;Fred, Alice&quot;</span><span class="tg"> dislikes=</span><span class="vl">&quot;Dawn, Enid&quot;</span><span class="tg">/&gt;</span></div>
<div class="code" style="left:512px;top:189px"><span class="tg">    &lt;person</span><span class="tg"> name=</span><span class="vl">&quot;Dawn&quot;</span><span class="tg"> likes=</span><span class="vl">&quot;Bob&quot;</span><span class="tg"> dislikes=</span><span class="vl">&quot;Fred&quot;</span><span class="tg">/&gt;</span></div>
<div class="code" style="left:512px;top:204px"><span class="tg">    &lt;person</span><span class="tg"> name=</span><span class="vl">&quot;Enid&quot;</span><span class="tg"> likes=</span><span class="vl">&quot;Charlie&quot;</span><span class="tg"> dislikes=</span><span class="vl">&quot;Alice&quot;</span><span class="tg">/&gt;</span></div>
<div class="code" style="left:512px;top:219px"><span class="tg">    &lt;person</span><span class="tg"> name=</span><span class="vl">&quot;Fred&quot;</span><span class="tg"> dislikes=</span><span class="vl">&quot;Bob&quot;</span><span class="tg"> likes=</span><span class="vl">&quot;Enid, Alice&quot;</span><span class="tg">/&gt;</span></div>
<div class="code" style="left:512px;top:234px"><span class="tg">&lt;/socialnetwork&gt;</span></div>
<div class="a" style="left:581px;top:173px;width:1px;height:14px;background:#000;"></div>
<div class="a" style="left:1410px;top:97px;width:16px;height:357px;background:#f0f0f0;"></div>
<svg style="left:1414px;top:103px" width="7" height="6" viewBox="0 0 7 6"><path d="M0.6 5.2L3.5 1.8L6.4 5.2" fill="none" stroke="#b4b4b4" stroke-width="2"/></svg>
<svg style="left:1414px;top:442px" width="7" height="6" viewBox="0 0 7 6"><path d="M0.6 0.8L3.5 4.2L6.4 0.8" fill="none" stroke="#b4b4b4" stroke-width="2"/></svg>
<div class="a" style="left:1426px;top:97px;width:13px;height:373px;background:#f7f7f7;"></div>
<div class="a" style="left:1428px;top:101px;width:8px;height:8px;background:#f5c518;border:1px solid #8a8e9a"></div>
<div class="a" style="left:1426px;top:113px;width:12px;height:1px;background:#707070;"></div>
<div class="a" style="left:1428px;top:114px;width:9px;height:5px;background:#fcf0c8;border:1px solid #f5cd50"></div>
<div class="a" style="left:1428px;top:147px;width:9px;height:5px;background:#fcf0c8;border:1px solid #f5cd50"></div>
<div class="a" style="left:1428px;top:162px;width:9px;height:5px;background:#fcf0c8;border:1px solid #f5cd50"></div>
<div class="a" style="left:1428px;top:177px;width:9px;height:5px;background:#fcf0c8;border:1px solid #f5cd50"></div>
<div class="a" style="left:1428px;top:192px;width:9px;height:5px;background:#fcf0c8;border:1px solid #f5cd50"></div>
<div class="a" style="left:1428px;top:207px;width:9px;height:5px;background:#fcf0c8;border:1px solid #f5cd50"></div>
<div class="a" style="left:1428px;top:222px;width:9px;height:5px;background:#fcf0c8;border:1px solid #f5cd50"></div>
<div class="a" style="left:488px;top:454px;width:21px;height:16px;background:#f8f8f8;"></div>
<div class="a" style="left:509px;top:454px;width:917px;height:16px;background:#f0f0f0;"></div>
<svg style="left:514px;top:458px" width="6" height="7" viewBox="0 0 6 7"><path d="M5.4 0.6L1.8 3.5L5.4 6.4" fill="none" stroke="#b4b4b4" stroke-width="2"/></svg>
<svg style="left:1398px;top:458px" width="6" height="7" viewBox="0 0 6 7"><path d="M0.6 0.6L4.2 3.5L0.6 6.4" fill="none" stroke="#b4b4b4" stroke-width="2"/></svg>
<div class="a" style="left:487px;top:475px;width:953px;height:359px;background:#d4d4d4;"></div>
<div class="a" style="left:488px;top:476px;width:951px;height:357px;background:#f0f0f0;"></div>
<div class="a" style="left:488px;top:476px;width:951px;height:24px;background:#e6e6e6;"></div>
<div class="a" style="left:488px;top:500px;width:951px;height:1px;background:#d4d4d4;"></div>
<div class="a" style="left:544px;top:476px;width:1px;height:24px;background:#d4d4d4;"></div>
<div class="a" style="left:545px;top:476px;width:77px;height:24px;background:#f0f0f0;"></div>
<div class="a" style="left:622px;top:476px;width:1px;height:24px;background:#d4d4d4;"></div>
<svg style="left:492px;top:481px" width="16" height="15" viewBox="0 0 16 15"><rect x="3.5" y="1.5" width="11" height="13" rx="1" fill="#fbf3e0" stroke="#c09a60"/><rect x="6" y="0.5" width="6" height="3" fill="#a0b0c8" stroke="#8090a8" stroke-width="0.6"/><path d="M7 6H13M8 8.5H13M8 11H13" stroke="#7a8aa8"/><path d="M0.8 9L3.5 12L8 5.5" fill="none" stroke="#1a74d8" stroke-width="2"/></svg>
<div class="t" style="left:512px;top:482px;font-size:12px;line-height:14px;color:#000;transform:scaleX(0.8737);transform-origin:0 0">Tasks</div>
<svg style="left:550px;top:482px" width="15" height="15" viewBox="0 0 15 15"><circle cx="5.5" cy="5.5" r="4.8" fill="#f4f4f4" stroke="#a8a090" stroke-width="1.2"/><path d="M4.3 3.5L2.5 5.5L4.3 7.5M6.7 3.5L8.5 5.5L6.7 7.5" fill="none" stroke="#7a2aa0" stroke-width="1.1"/><path d="M9 9L13.5 13.5" stroke="#8a6a50" stroke-width="2"/></svg>
<div class="t" style="left:569px;top:482px">Picto</div>
<svg style="left:604px;top:484px" width="10" height="10" viewBox="0 0 10 10"><path d="M0.5 0.5H2.5L4.5 2.5H5.5L7.5 0.5H9.5V2.5L7.5 4.5V5.5L9.5 7.5V9.5H7.5L5.5 7.5H4.5L2.5 9.5H0.5V7.5L2.5 5.5V4.5L0.5 2.5Z" fill="#fff" stroke="#555" stroke-width="1" stroke-linejoin="miter"/></svg>
<svg style="left:1001px;top:481px" width="16" height="14" viewBox="0 0 16 14"><path d="M7 1.5L1 7L7 12.5V9.5H14.5V4.5H7Z" fill="#ffe9a0" stroke="#c08a10" stroke-width="1.2"/></svg>
<svg style="left:1024px;top:481px" width="16" height="14" viewBox="0 0 16 14"><path d="M9 1.5L15 7L9 12.5V9.5H1.5V4.5H9Z" fill="#ffe9a0" stroke="#c08a10" stroke-width="1.2"/></svg>
<div class="a" style="left:1046px;top:480px;width:1px;height:17px;background:#8a8a8a;"></div>
<svg style="left:1056px;top:481px" width="16" height="16" viewBox="0 0 16 16"><circle cx="6" cy="6" r="5.2" fill="#f0f4fc" stroke="#5a6a8a" stroke-width="1.2"/><path d="M3 6H9M6 3V9" stroke="#1a3a9a" stroke-width="1.8"/><path d="M9.8 9.8L14.5 14.5" stroke="#7a5a3a" stroke-width="2"/></svg>
<svg style="left:1079px;top:481px" width="16" height="16" viewBox="0 0 16 16"><circle cx="6" cy="6" r="5.2" fill="#f0f4fc" stroke="#5a6a8a" stroke-width="1.2"/><path d="M3.2 5H8.8M3.2 7.5H8.8" stroke="#1a3a9a" stroke-width="1.4"/><path d="M9.8 9.8L14.5 14.5" stroke="#7a5a3a" stroke-width="2"/></svg>
<svg style="left:1102px;top:481px" width="16" height="16" viewBox="0 0 16 16"><circle cx="6" cy="6" r="5.2" fill="#f0f4fc" stroke="#5a6a8a" stroke-width="1.2"/><path d="M3 6H9" stroke="#1a3a9a" stroke-width="1.8"/><path d="M9.8 9.8L14.5 14.5" stroke="#7a5a3a" stroke-width="2"/></svg>
<div class="a" style="left:1124px;top:480px;width:1px;height:17px;background:#8a8a8a;"></div>
<svg style="left:1134px;top:482px" width="15" height="15" viewBox="0 0 15 15"><rect x="0.5" y="0.5" width="10" height="10" fill="#e8f0fa" stroke="#9ab0d0"/><rect x="3.5" y="3.5" width="11" height="11" fill="#f4f8fc" stroke="#8aa0c0"/></svg>
<svg style="left:1155px;top:487px" width="8" height="5" viewBox="0 0 8 5"><path d="M0 0H8L4 4.5Z" fill="#111"/></svg>
<div class="a" style="left:1170px;top:480px;width:1px;height:17px;background:#8a8a8a;"></div>
<svg style="left:1179px;top:481px" width="15" height="16" viewBox="0 0 15 16"><rect x="0.5" y="2.5" width="9" height="12" fill="#e8eef8" stroke="#8aa0c0"/><path d="M4.5 0.5H11.5L14.5 3.5V15.5H4.5Z" fill="#f4f8fc" stroke="#8aa0c0"/><path d="M6.5 6H12.5M6.5 8H12.5M6.5 10H12.5M6.5 12H12.5" stroke="#7a90b8"/></svg>
<svg style="left:1201px;top:482px" width="16" height="15" viewBox="0 0 16 15"><rect x="3.5" y="0.5" width="9" height="6" fill="#fff" stroke="#8aa0c0"/><rect x="0.5" y="5.5" width="15" height="8" rx="2" fill="#b8d0ec" stroke="#5a7ab0"/><rect x="3" y="9" width="10" height="2" fill="#6a8ac0"/></svg>
<svg style="left:1224px;top:481px" width="16" height="16" viewBox="0 0 16 16"><path d="M2 8Q2 2 9 2V0L13 3.5L9 7V5Q5 5 4.5 9Z" fill="#ffd35c" stroke="#c08a10" stroke-width="0.9"/><path d="M14 8Q14 14 7 14V16L3 12.5L7 9V11Q11 11 11.5 7Z" fill="#ffd35c" stroke="#c08a10" stroke-width="0.9"/></svg>
<svg style="left:1248px;top:481px" width="16" height="16" viewBox="0 0 16 16"><rect x="0.5" y="0.5" width="15" height="15" fill="#e8f0fa" stroke="#8aa0c0"/><rect x="11" y="1" width="4" height="14" fill="#c8d8ec"/><path d="M12 3H14M12 6H14M12 9H14" stroke="#5a7ab0"/><rect x="1.5" y="9.5" width="7" height="5" fill="#ffd35c" stroke="#b07a10"/><path d="M3 9.5V7.5Q5 5 7 7.5V9.5" fill="none" stroke="#8a8a8a"/></svg>
<div class="a" style="left:1270px;top:480px;width:1px;height:17px;background:#8a8a8a;"></div>
<svg style="left:1279px;top:481px" width="15" height="16" viewBox="0 0 15 16"><path d="M2 2L13 14" stroke="#3a5a9a" stroke-width="1.2"/><path d="M5 3H14M7 7H14M9 11H14" stroke="#6a88b8" stroke-width="1.5"/><path d="M3 2V9" stroke="#3a5a9a" stroke-width="1.5"/></svg>
<svg style="left:1301px;top:481px" width="16" height="16" viewBox="0 0 16 16"><rect x="0.5" y="0.5" width="15" height="15" fill="#eef4fa" stroke="#8aa0c0"/><path d="M9 3V13M9 3H12M9 8H12M9 13H12" stroke="#3a5a9a"/><rect x="11" y="2" width="3" height="2" fill="#3a5a9a"/><rect x="11" y="7" width="3" height="2" fill="#3a5a9a"/><rect x="11" y="12" width="3" height="2" fill="#3a5a9a"/><path d="M1 8H6L4 6M6 8L4 10" fill="none" stroke="#d89a10" stroke-width="1.3"/></svg>
<div class="a" style="left:1324px;top:480px;width:1px;height:17px;background:#8a8a8a;"></div>
<svg style="left:1334px;top:481px" width="14" height="16" viewBox="0 0 14 16"><path d="M0.5 0.5H13.5V12L11 15.5H0.5Z" fill="#f0f8f0" stroke="#9ab0a0"/><rect x="2.5" y="3" width="2" height="2" fill="#3a9a3a"/><rect x="2.5" y="7" width="2" height="2" fill="#3a9a3a"/><path d="M6 4H11M6 8H11M6 11H10" stroke="#4a6aa0"/></svg>
<svg style="left:1355px;top:487px" width="8" height="5" viewBox="0 0 8 5"><path d="M0 0H8L4 4.5Z" fill="#111"/></svg>
<svg style="left:1375px;top:481px" width="5" height="15" viewBox="0 0 5 15"><circle cx="2.5" cy="2.5" r="2" fill="#fff" stroke="#5a5a5a"/><circle cx="2.5" cy="7.5" r="2" fill="#fff" stroke="#5a5a5a"/><circle cx="2.5" cy="12.5" r="2" fill="#fff" stroke="#5a5a5a"/></svg>
<svg style="left:1396px;top:483px" width="10" height="4" viewBox="0 0 10 4"><rect x="0.5" y="0.5" width="9" height="3" fill="#fff" stroke="#5f5f5f"/></svg>
<svg style="left:1419px;top:483px" width="10" height="10" viewBox="0 0 10 10"><rect x="0.5" y="0.5" width="9" height="9" fill="#fff" stroke="#5f5f5f"/><path d="M0 2.5H10" stroke="#5f5f5f"/></svg>
<div class="a" style="left:493px;top:506px;width:941px;height:305px;background:#fff;"></div>
<div class="pic" style="left:501px;top:519px">Type &#x27;socialnetwork::SocialNetwork&#x27; not found</div>
<div class="pic" style="left:565px;top:550px;width:869px;overflow:hidden">at (C:\Users\chris\git\org.eclipse.epsilonnn\examples\org.eclipse.epsilon.examples.picto.socialnetwork\picto\</div>
<div class="pic" style="left:565px;top:580px;width:869px;overflow:hidden">at (C:\Users\chris\git\org.eclipse.epsilonnn\examples\org.eclipse.epsilon.examples.picto.socialnetwork\picto\</div>
<div class="pic" style="left:565px;top:610px;width:869px;overflow:hidden">at (C:\Users\chris\git\org.eclipse.epsilonnn\examples\org.eclipse.epsilon.examples.picto.socialnetwork\picto\</div>
<div class="a" style="left:527px;top:812px;width:703px;height:15px;background:#cdcdcd;"></div>
<svg style="left:510px;top:814px" width="9" height="11" viewBox="0 0 9 11"><path d="M5 0H9L4.5 5.5L9 11H5L0 5.5Z" fill="#5e5e5e"/></svg>
<svg style="left:1408px;top:814px" width="9" height="11" viewBox="0 0 9 11"><path d="M4 0H0L4.5 5.5L0 11H4L9 5.5Z" fill="#5e5e5e"/></svg>
<div class="t" style="left:1043px;top:757px;font-size:20px;line-height:22px;color:#c6c6c6">Windows aktivieren</div>
<div class="t" style="left:1043px;top:781px;font-size:14.5px;line-height:19px;color:#c6c6c6">Wechseln Sie zu den Einstellungen, um Windows zu</div>
<div class="t" style="left:1043px;top:801px;font-size:14.5px;line-height:19px;color:rgba(0,0,0,0.2)">aktivieren.</div>
<div class="a" style="left:0px;top:834px;width:1440px;height:26px;background:#f0f0f0;"></div>
<div class="a" style="left:739px;top:836px;width:1px;height:21px;background:#a0a0a0;"></div>
<div class="a" style="left:872px;top:836px;width:1px;height:21px;background:#a0a0a0;"></div>
<div class="a" style="left:1001px;top:836px;width:1px;height:21px;background:#a0a0a0;"></div>
<div class="t" style="left:747px;top:838px">Writable</div>
<div class="t" style="left:881px;top:838px">Insert</div>
<div class="t" style="left:1009px;top:838px;font-size:12px;line-height:14px;color:#000;transform:scaleX(0.9213);transform-origin:0 0">6 : 11 : 203</div>
<svg style="left:1128px;top:837px" width="2" height="19" viewBox="0 0 2 19"><rect y="1" width="2" height="2" fill="#b8b0a0"/><rect y="6" width="2" height="2" fill="#b8b0a0"/><rect y="11" width="2" height="2" fill="#b8b0a0"/><rect y="16" width="2" height="2" fill="#b8b0a0"/></svg>
<svg style="left:1413px;top:837px" width="2" height="19" viewBox="0 0 2 19"><rect y="1" width="2" height="2" fill="#b8b0a0"/><rect y="6" width="2" height="2" fill="#b8b0a0"/><rect y="11" width="2" height="2" fill="#b8b0a0"/><rect y="16" width="2" height="2" fill="#b8b0a0"/></svg>
<svg style="left:1424px;top:840px" width="10" height="15" viewBox="0 0 10 15"><defs><radialGradient id="blb" cx="0.5" cy="0.6" r="0.6"><stop offset="0" stop-color="#ffffff"/><stop offset="1" stop-color="#ffe070"/></radialGradient></defs><path d="M5 0.8Q9.2 0.8 9.2 4.8Q9.2 6.8 7.5 8.6V10H2.5V8.6Q0.8 6.8 0.8 4.8Q0.8 0.8 5 0.8Z" fill="url(#blb)" stroke="#f0a020" stroke-width="1.1"/><rect x="2.5" y="10" width="5" height="4" rx="1" fill="#5a6a88"/><rect x="3.5" y="11" width="3" height="1" fill="#c8d0e0"/></svg>
<div class="a" style="left:0px;top:860px;width:1440px;height:40px;background:#1f1f1f;"></div>
<svg style="left:16px;top:871px" width="16" height="17" viewBox="0 0 16 17"><path d="M0 2.7L6 1.9V8H0Z M7 1.7L16 0.5V8H7Z M0 9H6V15.3L0 14.5Z M7 9H16V17.3L7 16.1Z" fill="#fff"/></svg>
<div class="a" style="left:48px;top:860px;width:344px;height:40px;background:#f0f0f0;border:1px solid #c8c8c8"></div>
<svg style="left:60px;top:871px" width="17" height="18" viewBox="0 0 17 18"><circle cx="10.5" cy="6.5" r="5.5" fill="none" stroke="#222" stroke-width="1.3"/><path d="M6.5 10.5L1 16" stroke="#222" stroke-width="1.5"/></svg>
<div class="t" style="left:88px;top:871px;font-size:15px;line-height:18px;color:#333;transform:scaleX(0.9812);transform-origin:0 0">Zur Suche Text hier eingeben</div>
<svg style="left:407px;top:872px" width="18" height="16" viewBox="0 0 18 16"><path d="M1.5 2V0.5H11.5V2M1.5 13V14.5H11.5V13" fill="none" stroke="#fff" stroke-width="1"/><rect x="1.5" y="4.5" width="10" height="6.5" fill="none" stroke="#fff" stroke-width="1"/><path d="M15.5 0V15" stroke="#fff" stroke-width="1"/><rect x="14.3" y="4.2" width="2.6" height="2.6" fill="#fff"/></svg>
<svg style="left:454px;top:867px" width="26" height="26" viewBox="0 0 26 26"><defs><linearGradient id="eg" x1="0" y1="0" x2="1" y2="1"><stop offset="0" stop-color="#35c1f1"/><stop offset="0.6" stop-color="#1b7fd4"/><stop offset="1" stop-color="#0c59a4"/></linearGradient></defs><circle cx="13" cy="13" r="12.5" fill="url(#eg)"/><path d="M13 9Q20 9 21 14Q19 10 14 11Q8 12 9 17Q11 22 19 21Q14 25 8 22Q3 18 5 12Q8 7 13 9Z" fill="#1e3a6a"/><path d="M25 14Q24 6 16 4Q22 7 21 13Z" fill="#7ed56f"/></svg>
<div class="a" style="left:447px;top:898px;width:40px;height:2px;background:#76b9ed;"></div>
<svg style="left:504px;top:869px" width="24" height="22" viewBox="0 0 24 22"><path d="M0 2H8L10 4H23V20H0Z" fill="#f0c040"/><path d="M0 6H23V20H0Z" fill="#ffd65c"/><rect x="7" y="13" width="10" height="4" fill="#2a8ad8"/><rect x="9" y="17" width="6" height="3" fill="#1a5aa8"/></svg>
<div class="a" style="left:496px;top:898px;width:40px;height:2px;background:#76b9ed;"></div>
<svg style="left:553px;top:867px" width="23" height="25" viewBox="0 0 23 25"><path d="M7 7V4Q7 1 11.5 1Q16 1 16 4V7" fill="none" stroke="#eee" stroke-width="1.6"/><rect x="0.5" y="6.5" width="22" height="18" fill="#f4f4f4"/><rect x="7" y="12" width="4" height="4" fill="#f25022"/><rect x="12" y="12" width="4" height="4" fill="#7fba00"/><rect x="7" y="17" width="4" height="4" fill="#00a4ef"/><rect x="12" y="17" width="4" height="4" fill="#ffb900"/></svg>
<svg style="left:601px;top:868px" width="25" height="23" viewBox="0 0 25 23"><defs><linearGradient id="ml" x1="0" y1="0" x2="1" y2="1"><stop offset="0" stop-color="#1b8ee0"/><stop offset="1" stop-color="#38c0f0"/></linearGradient></defs><path d="M0 8L12.5 0.5L25 8V23H0Z" fill="#0c5cb0"/><path d="M2.5 8L12.5 3L22.5 8V14H2.5Z" fill="#f4f4f4"/><path d="M0 8L12.5 15.5L25 8V23H0Z" fill="url(#ml)"/></svg>
<svg style="left:651px;top:866px" width="24" height="27" viewBox="0 0 24 27"><path d="M17 0L24 3V24L17 27L6 17L2 20L0 19V8L2 7L6 10Z M17 7L10 13.5L17 20Z M2 10V17L5.5 13.5Z" fill="#865fc5" fill-rule="evenodd"/></svg>
<svg style="left:700px;top:868px" width="24" height="23" viewBox="0 0 24 23"><circle cx="11.5" cy="11.5" r="11.5" fill="#f7941e"/><circle cx="13.3" cy="11.5" r="11.3" fill="#1f1f1f"/><circle cx="13.2" cy="11.5" r="10.5" fill="#2c2160"/><circle cx="13.2" cy="15" r="6" fill="#3e3488"/><rect x="3" y="8.6" width="20.5" height="1.6" fill="#fff"/><rect x="2.7" y="11" width="21" height="1.6" fill="#ddd8ee"/><rect x="3" y="13.6" width="20.5" height="1.5" fill="#fff"/></svg>
<div class="a" style="left:737px;top:860px;width:44px;height:40px;background:#4a4a4a;"></div>
<div class="a" style="left:781px;top:860px;width:1px;height:40px;background:#2a2a2a;"></div>
<div class="a" style="left:782px;top:860px;width:3px;height:40px;background:#3c3c3c;"></div>
<svg style="left:749px;top:868px" width="24" height="23" viewBox="0 0 24 23"><circle cx="11.5" cy="11.5" r="11.5" fill="#f7941e"/><circle cx="13.3" cy="11.5" r="11.3" fill="#4a4a4a"/><circle cx="13.2" cy="11.5" r="10.5" fill="#2c2160"/><circle cx="13.2" cy="15" r="6" fill="#3e3488"/><rect x="3" y="8.6" width="20.5" height="1.6" fill="#fff"/><rect x="2.7" y="11" width="21" height="1.6" fill="#ddd8ee"/><rect x="3" y="13.6" width="20.5" height="1.5" fill="#fff"/></svg>
<div class="a" style="left:737px;top:898px;width:48px;height:2px;background:#76b9ed;"></div>
<svg style="left:1043px;top:870px" width="20" height="20" viewBox="0 0 20 20"><defs><radialGradient id="sg" cx="0.4" cy="0.35" r="0.7"><stop offset="0" stop-color="#ffe680"/><stop offset="1" stop-color="#f5a800"/></radialGradient></defs><circle cx="10" cy="10" r="9.5" fill="url(#sg)"/></svg>
<div class="t" style="left:1072px;top:873px;font-size:14px;line-height:16px;color:#fff;transform:scaleX(0.9590);transform-origin:0 0">22°C</div>
<div class="t" style="left:1110px;top:873px;font-size:14px;line-height:16px;color:#fff;transform:scaleX(1.0093);transform-origin:0 0">Sonnig</div>
<svg style="left:1170px;top:875px" width="14" height="8" viewBox="0 0 14 8"><path d="M1 7L7 1L13 7" fill="none" stroke="#fff" stroke-width="1.3"/></svg>
<svg style="left:1192px;top:873px" width="18" height="12" viewBox="0 0 18 12"><path d="M4 11Q0 11 0.5 7.5Q1 5 4 5Q5 1 9.5 1Q13.5 1 14 5Q17.5 5 17.5 8Q17.5 11 14 11Z" fill="#e6e6e6"/></svg>
<svg style="left:1217px;top:873px" width="17" height="13" viewBox="0 0 17 13"><path d="M3 0V3M6 0V3M1.5 3H7.5V5H1.5Z" stroke="#fff" fill="#fff" stroke-width="1"/><rect x="2.5" y="5.5" width="13" height="6.5" fill="none" stroke="#fff" stroke-width="1.2"/><rect x="4" y="7" width="8" height="3.5" fill="#fff"/></svg>
<svg style="left:1242px;top:872px" width="17" height="15" viewBox="0 0 17 15"><path d="M1 14Q1 2 15 1M3.5 14Q3.5 5 15 4M6 14Q6 8 15 7M8.5 14Q8.5 11 11 10" fill="none" stroke="#fff" stroke-width="1.1"/><circle cx="13" cy="13" r="1.6" fill="#fff"/></svg>
<svg style="left:1266px;top:872px" width="17" height="15" viewBox="0 0 17 15"><path d="M1 5H4L8 1.5V13.5L4 10H1Z" fill="none" stroke="#fff" stroke-width="1.1"/><path d="M10.5 5Q12 7.5 10.5 10M12.5 3Q15 7.5 12.5 12M14.5 1.2Q18 7.5 14.5 13.8" fill="none" stroke="#fff" stroke-width="1.1"/></svg>
<div class="t" style="left:1291px;top:873px;font-size:13px;line-height:15px;color:#fff;transform:scaleX(0.8562);transform-origin:0 0">DEU</div>
<div class="t" style="left:1340px;top:863px;font-size:13px;line-height:15px;color:#fff;transform:scaleX(0.8607);transform-origin:0 0">18:40</div>
<div class="t" style="left:1326px;top:881px;font-size:13px;line-height:15px;color:#fff;transform:scaleX(0.8453);transform-origin:0 0">06.09.2021</div>
<svg style="left:1399px;top:872px" width="17" height="17" viewBox="0 0 17 17"><path d="M0.6 0.6H16.4V12.4H11L8.5 15.5L6 12.4H0.6Z" fill="none" stroke="#fff" stroke-width="1.2"/></svg>
<div class="a" style="left:1435px;top:860px;width:1px;height:40px;background:#6a6a6a;"></div>
</body></html>
